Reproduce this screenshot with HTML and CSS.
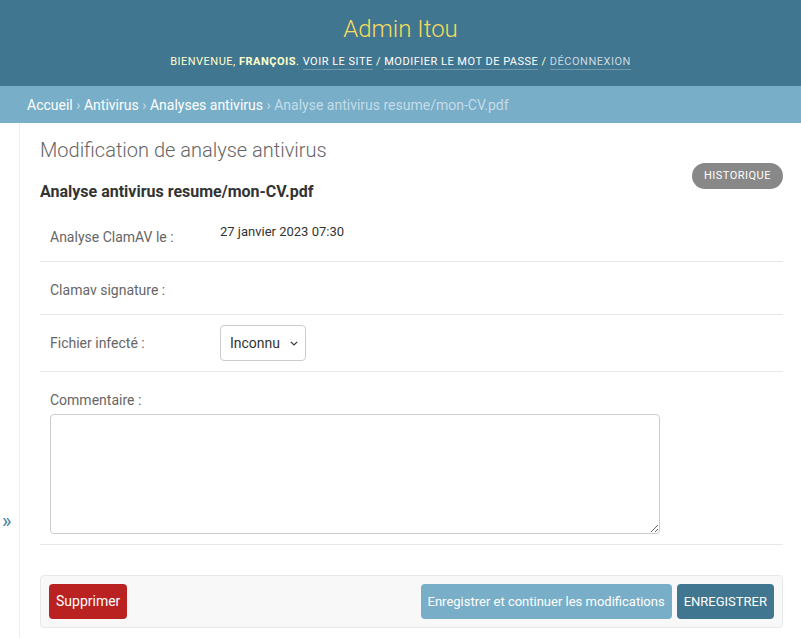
FILE: index.html
```html
<!DOCTYPE html>
<html lang="fr">
<head>
<meta charset="utf-8">
<title>Modification de analyse antivirus | Admin Itou</title>
<link rel="stylesheet" href="styles.css">
</head>
<body>
<header class="header">
  <div class="branding">Admin Itou</div>
  <div class="user-tools">Bienvenue, <strong>François</strong>. <a class="ut-link" href="#">Voir le site</a> / <a class="ut-link" href="#">Modifier le mot de passe</a> / <a class="ut-link logout" href="#">Déconnexion</a></div>
</header>
<nav class="breadcrumbs"><a href="#">Accueil</a> <span class="sep">›</span> <a href="#">Antivirus</a> <span class="sep">›</span> <a href="#">Analyses antivirus</a> <span class="sep">›</span> <span class="current">Analyse antivirus resume/mon-CV.pdf</span></nav>
<div class="main">
  <button class="toggle-nav" type="button">»</button>
  <div class="content">
    <h1 class="page-title">Modification de analyse antivirus</h1>
    <div class="title-row">
      <h2 class="object-title">Analyse antivirus resume/mon-CV.pdf</h2>
      <a class="history" href="#">Historique</a>
    </div>
    <form class="change-form">
      <div class="form-row">
        <label class="field-label">Analyse ClamAV le :</label>
        <div class="readonly">27 janvier 2023 07:30</div>
      </div>
      <div class="form-row">
        <label class="field-label">Clamav signature :</label>
        <div class="readonly"></div>
      </div>
      <div class="form-row">
        <label class="field-label" for="infected">Fichier infecté :</label>
        <span class="select-wrap">
          <select id="infected" class="select"><option>Inconnu</option><option>Oui</option><option>Non</option></select>
          <svg class="chevron" width="8" height="5" viewBox="0 0 8 5"><path d="M0.8 0.8 L4 4 L7.2 0.8" fill="none" stroke="#333" stroke-width="1.2"/></svg>
        </span>
      </div>
      <div class="form-row stacked">
        <label class="field-label" for="comment">Commentaire :</label>
        <textarea id="comment" class="textarea"></textarea>
      </div>
      <div class="submit-row">
        <a class="btn delete" href="#">Supprimer</a>
        <span class="spacer"></span>
        <button class="btn continue" type="button">Enregistrer et continuer les modifications</button>
        <button class="btn save" type="button">ENREGISTRER</button>
      </div>
    </form>
  </div>
</div>
</body>
</html>
```

FILE: styles.css
```css
* { box-sizing: border-box; }
html, body { margin: 0; padding: 0; }
body {
  font-family: Roboto, "Liberation Sans", Arial, sans-serif;
  background: #fff;
  color: #333;
  font-size: 14px;
}
a { text-decoration: none; }

.header {
  background: #417690;
  height: 86px;
  display: flex;
  flex-direction: column;
  align-items: center;
  padding-top: 15px;
}
.branding {
  color: #f5dd5d;
  font-size: 24px;
  font-weight: 300;
  line-height: 28px;
}
.user-tools {
  margin-top: 12px;
  font-size: 11px;
  letter-spacing: 0.5px;
  text-transform: uppercase;
  color: #ffc;
  line-height: 14px;
}
.user-tools strong { font-weight: 700; }
.ut-link {
  color: #fff;
  border-bottom: 1px solid rgba(255,255,255,0.25);
  padding-bottom: 1px;
}
.ut-link.logout { color: #c9d9e2; }

.breadcrumbs {
  background: #79aec8;
  height: 37px;
  padding: 0 27px;
  display: flex;
  align-items: center;
  gap: 3.5px;
  font-size: 14px;
  color: #c4dce8;
  white-space: nowrap;
}
.breadcrumbs a { color: #fff; }
.breadcrumbs .sep { color: #c4dce8; }
.breadcrumbs .current { color: #c4dce8; }

.main {
  display: flex;
  min-height: 515px;
}
.toggle-nav {
  flex: 0 0 20px;
  width: 20px;
  border: 0;
  border-right: 1px solid #eee;
  background: #fff;
  color: #447e9b;
  font-family: Roboto, sans-serif;
  font-size: 20px;
  padding: 386px 0 0 2px;
  text-align: left;
  line-height: 24px;
  display: flex;
  align-items: flex-start;
}
.content {
  flex: 1;
  padding: 15px 18px 10px 20px;
}
.page-title {
  margin: 0;
  font-size: 20px;
  font-weight: 300;
  color: #666;
  line-height: 24px;
}
.title-row {
  display: flex;
  align-items: flex-start;
  justify-content: space-between;
  margin-top: 1px;
}
.object-title {
  margin: 19px 0 0 0;
  font-size: 16px;
  font-weight: 700;
  color: #333;
  line-height: 20px;
}
.history {
  display: block;
  background: #888;
  color: #fff;
  font-size: 11px;
  letter-spacing: 0.5px;
  text-transform: uppercase;
  height: 26px;
  line-height: 26px;
  padding: 0 12px;
  border-radius: 15px;
  margin-right: 0;
}

.change-form { margin-top: 7px; }
.form-row {
  display: flex;
  align-items: flex-start;
  padding: 10px;
  border-bottom: 1px solid #e8e8e8;
}
.form-row.stacked { flex-direction: column; }
.field-label {
  width: 170px;
  flex: 0 0 auto;
  color: #666;
  font-size: 14px;
  line-height: 20px;
  padding: 8px 0 4px 0;
}
.readonly {
  font-size: 13px;
  color: #333;
  line-height: 20px;
  padding-top: 3px;
}
.select-wrap {
  position: relative;
  display: block;
  width: 86px;
  height: 36px;
}
.select {
  -webkit-appearance: none;
  appearance: none;
  height: 36px;
  width: 86px;
  border: 1px solid #ccc;
  border-radius: 4px;
  background: #fff;
  color: #333;
  font-family: Roboto, sans-serif;
  font-size: 14px;
  padding: 0 0 0 9px;
}
.chevron {
  position: absolute;
  right: 8px;
  top: 16px;
  pointer-events: none;
}
.textarea {
  margin: 0;
  width: 610px;
  height: 120px;
  border: 1px solid #ccc;
  border-radius: 4px;
  resize: both;
  font-family: Roboto, sans-serif;
}

.submit-row {
  margin-top: 30px;
  display: flex;
  align-items: center;
  gap: 5px;
  padding: 8px;
  background: #f8f8f8;
  border: 1px solid #e8e8e8;
  border-radius: 4px;
}
.spacer { flex: 1; }
.btn {
  display: block;
  height: 35px;
  line-height: 35px;
  padding: 0 7px;
  border: 0;
  border-radius: 4px;
  color: #fff;
  font-family: Roboto, sans-serif;
  font-size: 14px;
}
.btn.delete { background: #ba2121; }
.btn.continue { background: #79aec8; font-size: 13px; }
.btn.save { background: #417690; font-size: 13px; }
```
